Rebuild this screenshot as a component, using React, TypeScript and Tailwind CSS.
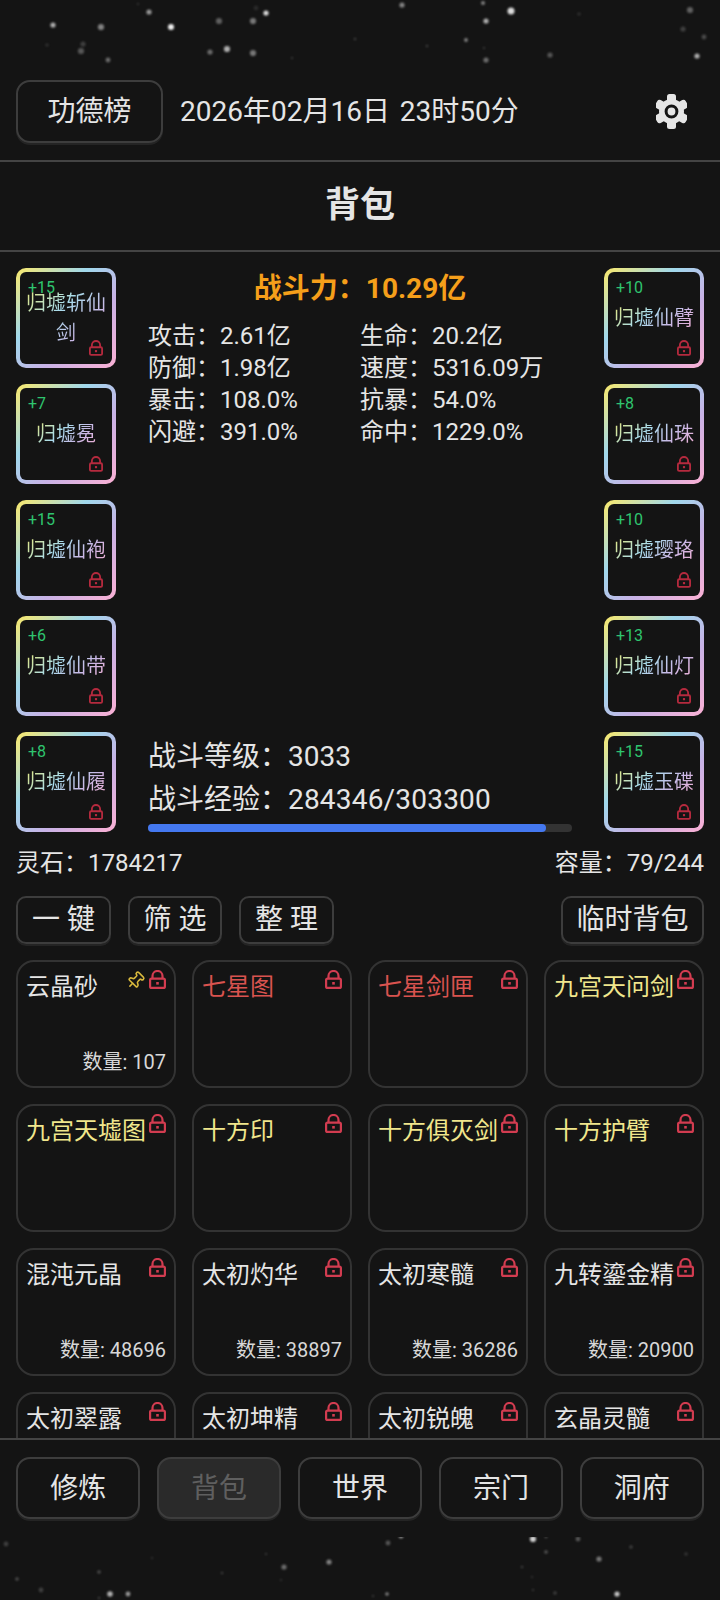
import {Pin} from "lucide-react";

type Star = [number, number, number, number];

const COLON = "\uFF1A";

const stars: Star[] = [
    [53, 25, 2.6, .7], [101, 27, 3.1, .5], [149, 12, 2.6, .6], [171, 27, 3, 1], [219, 21, 3.1, .35],
    [253, 21, 3.1, .45], [266, 13, 2.6, .9], [83, 44, 2.6, .2], [81, 51, 3.1, .3], [47, 45, 1.8, .12],
    [108, 60, 2.4, .4], [210, 52, 2.6, .4], [227, 49, 3.1, .7], [253, 53, 3.1, .45], [402, 5, 2.6, .5],
    [483, 3, 2, .5], [511, 11, 3.5, .9], [486, 21, 2.6, .7], [466, 40, 1.9, .5], [486, 60, 2.6, .4],
    [550, 55, 2.6, .3], [690, 10, 3.1, .35], [683, 29, 2.6, .2], [704, 37, 2.4, .25], [697, 56, 2.6, .7],
    [579, 14, 1.8, .12], [427, 46, 1.3, .2], [355, 39, 1.3, .2], [484, 48, 1.3, .15], [292, 58, 1.3, .15],
    [256, 8, 2.4, .1], [138, 4, 1.3, .12],
    [401, 1536, 2.4, .6], [533, 1539, 3.1, .85], [578, 1539, 2.4, .3], [546, 1537, 1.3, .3], [388, 1543, 2.4, .3],
    [6, 1544, 2.4, .2], [546, 1552, 1.8, .3], [631, 1547, 1.8, .2], [599, 1559, 2.6, .45], [686, 1554, 1.8, .15],
    [284, 1567, 2.6, .4], [329, 1562, 2.6, .5], [99, 1572, 1.8, .25], [266, 1554, 1.3, .15], [222, 1573, 1.3, .2],
    [522, 1567, 1.3, .2], [17, 1579, 1.8, .25], [41, 1590, 2.4, .2], [110, 1594, 2.8, .7], [128, 1594, 2.4, .6],
    [387, 1594, 1.8, .5], [617, 1594, 2.6, .8], [555, 1593, 1.8, .2], [373, 1596, 1.3, .15], [533, 1590, 1.3, .15],
    [99, 1598, 1.3, .2], [532, 1577, 1.3, .1], [281, 1580, 1.3, .1], [152, 1558, 1.3, .1],
];

const leftGear = [
    {level: 15, name: "归墟斩仙剑"},
    {level: 7, name: "归墟冕"},
    {level: 15, name: "归墟仙袍"},
    {level: 6, name: "归墟仙带"},
    {level: 8, name: "归墟仙履"},
];

const rightGear = [
    {level: 10, name: "归墟仙臂"},
    {level: 8, name: "归墟仙珠"},
    {level: 10, name: "归墟璎珞"},
    {level: 13, name: "归墟仙灯"},
    {level: 15, name: "归墟玉碟"},
];

const statRows = [
    ["攻击", "2.61亿"], ["生命", "20.2亿"],
    ["防御", "1.98亿"], ["速度", "5316.09万"],
    ["暴击", "108.0%"], ["抗暴", "54.0%"],
    ["闪避", "391.0%"], ["命中", "1229.0%"],
];

type Item = {name: string; tone: "white" | "red" | "yellow"; count?: number; pinned?: boolean};

const items: Item[] = [
    {name: "云晶砂", tone: "white", count: 107, pinned: true},
    {name: "七星图", tone: "red"},
    {name: "七星剑匣", tone: "red"},
    {name: "九宫天问剑", tone: "yellow"},
    {name: "九宫天墟图", tone: "yellow"},
    {name: "十方印", tone: "yellow"},
    {name: "十方俱灭剑", tone: "yellow"},
    {name: "十方护臂", tone: "yellow"},
    {name: "混沌元晶", tone: "white", count: 48696},
    {name: "太初灼华", tone: "white", count: 38897},
    {name: "太初寒髓", tone: "white", count: 36286},
    {name: "九转鎏金精", tone: "white", count: 20900},
    {name: "太初翠露", tone: "white"},
    {name: "太初坤精", tone: "white"},
    {name: "太初锐魄", tone: "white"},
    {name: "玄晶灵髓", tone: "white"},
];

function LockIcon({className}: {className: string}) {
    return (
        <svg viewBox="0 0 17 19" fill="none" stroke="currentColor" strokeWidth="2.2" className={className}>
            <path d="M3.5 9V6a5 5 0 0 1 10 0v3"/>
            <rect x="1.1" y="8.6" width="14.8" height="9.3" rx="1.5"/>
            <rect x="7.2" y="12" width="2.6" height="2.6" fill="currentColor" stroke="none"/>
        </svg>
    );
}

function GearIcon() {
    return (
        <svg viewBox="-15.5 -17.5 31 35" className="h-[35px] w-[31px] text-[#e5e5e5]" fill="currentColor">
            {[0, 60, 120, 180, 240, 300].map(a => (
                <rect key={a} x="-4.5" y="-17.5" width="9" height="9" rx="2.5" transform={`rotate(${a})`}/>
            ))}
            <circle r="12.5"/>
            <circle r="5.4" stroke="#141414" strokeWidth="3"/>
        </svg>
    );
}

function GearSlot({level, name}: {level: number; name: string}) {
    return (
        <div className="relative h-[100px] w-[100px] rounded-[10px] bg-[linear-gradient(135deg,#fbe96a_0%,#a0d8ec_36%,#c8b2e6_64%,#fbb0d4_100%)] p-1">
            <div className="flex h-full w-full items-center justify-center rounded-[6px] bg-[#141414] px-[3px]">
                <span className="inline-block bg-[linear-gradient(135deg,#e8e878_0%,#a9dcec_40%,#c9b8e6_70%,#f6aed2_100%)] bg-clip-text text-center text-[20px] leading-[30px] text-transparent">
                    {name}
                </span>
            </div>
            <span className="absolute left-3 top-[10px] font-['Roboto'] text-[16px] leading-5 text-[#2fc46f]">+{level}</span>
            <LockIcon className="absolute bottom-3 right-[13px] h-4 w-[14px] text-[#b52a3e]"/>
        </div>
    );
}

function ItemCard({item}: {item: Item}) {
    const tone = item.tone === "red" ? "text-[#d9534f]" : item.tone === "yellow" ? "text-[#f0e68c]" : "text-[#e5e5e5]";
    return (
        <div className="relative h-[128px] rounded-[18px] border-2 border-[#333333] pl-2 pt-[7px]">
            <div className={`text-[24px] leading-9 ${tone}`}>{item.name}</div>
            {item.pinned && <Pin className="absolute right-[29px] top-[9px] h-[19px] w-[19px] rotate-45 text-[#d6b73c]" strokeWidth={2}/>}
            <LockIcon className="absolute right-[8px] top-[8px] h-[19px] w-[17px] text-[#d23c50]"/>
            {item.count !== undefined && (
                <div className="absolute bottom-[9px] right-2 text-[20px] leading-[30px] text-[#d8d8d8]">数量: {item.count}</div>
            )}
        </div>
    );
}

const outlineButton = "rounded-[10px] border-2 border-[#3d3d3d] shadow-[0_2px_0_#242424]";

export default function App() {
    return (
        <div className="relative h-[1600px] w-[720px] overflow-hidden bg-[#141414] pt-16 font-['Roboto','Noto_Sans_CJK_SC',sans-serif] text-[#e5e5e5]">
            <svg className="absolute inset-0" width="720" height="1600">
                <g className="blur-[0.8px]" fill="#f2f2f2">
                    {stars.map(([x, y, r, o], i) => (
                        <circle key={i} cx={x} cy={y} r={r} opacity={o}/>
                    ))}
                </g>
            </svg>

            <div className="relative flex h-[1473px] flex-col bg-[#141414] pt-4">
                <div className="flex h-20 items-start px-4">
                    <button className={`${outlineButton} h-[63px] w-[147px] rounded-[14px] text-[28px]`}>功德榜</button>
                    <span className="ml-[17px] text-[28px] leading-[63px] [word-spacing:3px]">2026年02月16日 23时50分</span>
                    <div className="ml-auto mr-[17px] mt-[14px]">
                        <GearIcon/>
                    </div>
                </div>

                <div className="flex h-[92px] items-center justify-center border-y-2 border-[#444444] text-[35px] font-bold">背包</div>

                <div className="flex justify-between px-4 pt-4">
                    <div className="flex flex-col gap-4">
                        {leftGear.map(g => <GearSlot key={g.name} {...g}/>)}
                    </div>

                    <div className="flex w-[424px] flex-col">
                        <div className="mt-[3px] text-center text-[28px] font-bold leading-9 text-[#f59f1a]">战斗力{COLON}10.29亿</div>
                        <div className="mt-[13px] grid grid-cols-2 text-[24px] leading-[32px]">
                            {statRows.map(([label, value]) => (
                                <div key={label} className="flex">
                                    <span className="w-[72px] shrink-0 whitespace-nowrap">{label}{COLON}</span>
                                    <span>{value}</span>
                                </div>
                            ))}
                        </div>
                        <div className="mt-auto text-[28px] leading-[43px]">
                            <div className="flex"><span className="w-[140px] shrink-0 whitespace-nowrap">战斗等级{COLON}</span>3033</div>
                            <div className="flex"><span className="w-[140px] shrink-0 whitespace-nowrap">战斗经验{COLON}</span><span className="tracking-[0.2px]">284346/303300</span></div>
                        </div>
                        <div className="mt-[3px] h-2 rounded-full bg-[#333333]">
                            <div className="h-full rounded-full bg-[#4478f0]" style={{width: `${(284346 / 303300) * 100}%`}}/>
                        </div>
                    </div>

                    <div className="flex flex-col gap-4">
                        {rightGear.map(g => <GearSlot key={g.name} {...g}/>)}
                    </div>
                </div>

                <div className="mt-[15px] flex justify-between px-4 text-[24px] leading-8">
                    <span>灵石{COLON}1784217</span>
                    <span>容量{COLON}79/244</span>
                </div>

                <div className="mt-[17px] flex gap-[17px] px-4 text-[28px] [word-spacing:3px]">
                    <button className={`${outlineButton} h-[48px] w-[95px]`}>一 键</button>
                    <button className={`${outlineButton} h-[48px] w-[94px]`}>筛 选</button>
                    <button className={`${outlineButton} h-[48px] w-[95px]`}>整 理</button>
                    <button className={`${outlineButton} ml-auto h-[48px] w-[143px]`}>临时背包</button>
                </div>

                <div className="mt-4 min-h-0 flex-1 overflow-hidden px-4">
                    <div className="grid grid-cols-4 gap-4">
                        {items.map(item => <ItemCard key={item.name} item={item}/>)}
                    </div>
                </div>

                <div className="flex gap-[16.5px] border-t-2 border-[#444444] px-4 pb-[18px] pt-[17px] text-[28px]">
                    {["修炼", "背包", "世界", "宗门", "洞府"].map(label => (
                        <button
                            key={label}
                            className={`${outlineButton} h-[62px] flex-1 rounded-[14px] pt-[2px] ${label === "背包" ? "bg-[#2a2a2a] text-[#5f5f5f]" : ""}`}
                        >
                            {label}
                        </button>
                    ))}
                </div>
            </div>
        </div>
    );
}
